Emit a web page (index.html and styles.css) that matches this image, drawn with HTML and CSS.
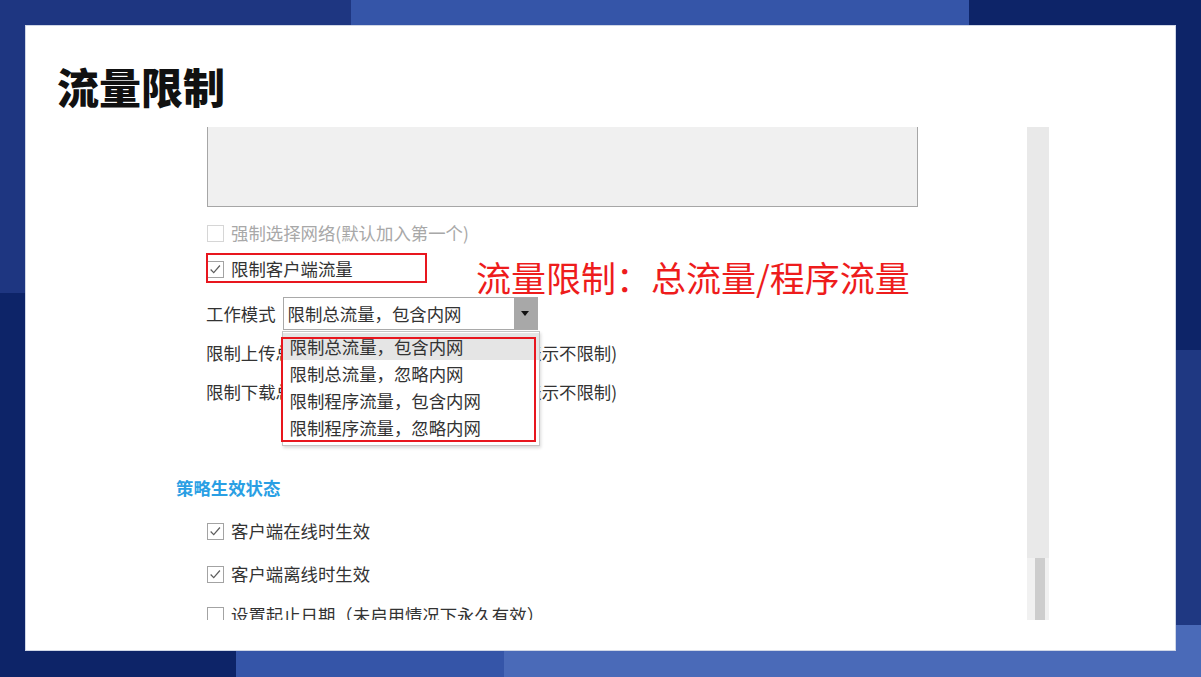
FILE: index.html
```html
<!DOCTYPE html>
<html lang="zh-CN">

<head>
    <meta charset="UTF-8">
    <meta name="viewport" content="width=device-width, initial-scale=1.0">
    <title>流量限制</title>
    <link rel="stylesheet" href="styles.css">
</head>

<body>
    <div class="slide">
        <div class="card">
            <h1 class="title">流量限制</h1>

            <div class="shot">
                <div class="pane">
                    <div class="notes-box"></div>

                    <div class="row row-force disabled">
                        <span class="box"></span>强制选择网络(默认加入第一个)
                    </div>

                    <div class="row row-limit marked">
                        <span class="box">
                            <svg viewBox="0 0 17 17" width="15" height="15"><polyline points="3,8.5 6.5,12 13.5,4" /></svg>
                        </span>限制客户端流量
                    </div>

                    <div class="row row-mode">
                        <span class="label">工作模式</span>
                        <div class="select">
                            <span class="value">限制总流量，包含内网</span>
                            <span class="arrow"></span>
                            <ul class="options">
                                <li class="current">限制总流量，包含内网</li>
                                <li>限制总流量，忽略内网</li>
                                <li>限制程序流量，包含内网</li>
                                <li>限制程序流量，忽略内网</li>
                            </ul>
                        </div>
                    </div>

                    <div class="row row-up">
                        <span>限制上传总流量</span>
                        <span class="field"></span>
                        <span>(0表示不限制)</span>
                    </div>

                    <div class="row row-down">
                        <span>限制下载总流量</span>
                        <span class="field"></span>
                        <span>(0表示不限制)</span>
                    </div>

                    <h2 class="section">策略生效状态</h2>

                    <div class="row row-online">
                        <span class="box">
                            <svg viewBox="0 0 17 17" width="15" height="15"><polyline points="3,8.5 6.5,12 13.5,4" /></svg>
                        </span>客户端在线时生效
                    </div>

                    <div class="row row-offline">
                        <span class="box">
                            <svg viewBox="0 0 17 17" width="15" height="15"><polyline points="3,8.5 6.5,12 13.5,4" /></svg>
                        </span>客户端离线时生效
                    </div>

                    <div class="row row-dates">
                        <span class="box"></span>设置起止日期（未启用情况下永久有效）
                    </div>

                    <p class="callout">流量限制：总流量/程序流量</p>
                </div>

                <div class="scrollbar">
                    <div class="thumb-track"><div class="thumb"></div></div>
                </div>
            </div>
        </div>
    </div>
</body>

</html>
```

FILE: styles.css
```css
body {
    margin: 0;
    font-family: "Noto Sans CJK SC", "Liberation Sans", sans-serif;
}

/* slide frame: coloured strips around the white card */
.slide {
    width: 1201px;
    height: 677px;
    box-sizing: border-box;
    padding: 25px 25px 26px 25px;
    background:
        linear-gradient(to right, #1e3681 0 351px, #3555a8 351px 969px, #0d2468 969px) top / 100% 25px no-repeat,
        linear-gradient(to right, #0d2468 0 236px, #3555a8 236px 504px, #4a6ab8 504px) bottom / 100% 26px no-repeat,
        linear-gradient(to bottom, #1e3681 0 293px, #0d2468 293px) left / 25px 100% no-repeat,
        linear-gradient(to bottom, #0d2468 0 350px, #1f3882 350px 625px, #4a6ab8 625px) right / 25px 100% no-repeat;
}

.card {
    height: 100%;
    box-sizing: border-box;
    background: #fff;
    border: 1px solid #cfd6e6;
    padding-top: 39px;
}

.title {
    margin: 0 0 20px 31px;
    font-size: 42px;
    line-height: 42px;
    font-weight: 900;
    color: #111;
}

/* settings window */
.shot {
    display: flex;
    margin-left: 144px;
    width: 879px;
    height: 493px;
    overflow: hidden;
}

.pane {
    flex: 1;
    position: relative;
    overflow: hidden;
}

.notes-box {
    margin: -20px 0 0 37px;
    width: 711px;
    height: 100px;
    box-sizing: border-box;
    background: #f0f0f0;
    border: 1px solid #a6a6a6;
}

.row {
    display: flex;
    align-items: center;
    height: 26px;
    padding-left: 37px;
    font-size: 17.4px;
    line-height: 26px;
    color: #333;
    white-space: nowrap;
}

.row-force { margin-top: 13px; }
.row-limit { margin-top: 10px; }
.row-mode { margin-top: 15px; height: 33px; padding-left: 36px; }
.row-up { margin-top: 10px; padding-left: 36px; }
.row-down { margin-top: 13px; padding-left: 36px; }
.row-online { margin-top: 17px; }
.row-offline { margin-top: 17px; }
.row-dates { margin-top: 15px; }

.box {
    flex: none;
    display: flex;
    align-items: center;
    justify-content: center;
    width: 17px;
    height: 17px;
    box-sizing: border-box;
    border: 1px solid #a3a3a3;
    margin-right: 7px;
    background: #fff;
}

.box polyline {
    fill: none;
    stroke: #5e5e5e;
    stroke-width: 1.4;
}

.disabled {
    color: #a8a8a8;
}

.disabled .box {
    border-color: #d6d6d6;
}

.marked {
    position: relative;
}

.marked::after {
    content: "";
    position: absolute;
    left: 36px;
    top: -3px;
    width: 221px;
    height: 30px;
    box-sizing: border-box;
    border: 2px solid #e8161e;
}

/* combo box with its open list */
.select {
    position: relative;
    display: flex;
    margin-left: 7px;
    width: 255px;
    height: 33px;
    box-sizing: border-box;
    border: 1px solid #a9a9a9;
    background: #fff;
}

.select .value {
    flex: 1;
    padding-left: 4px;
    line-height: 31px;
}

.select .arrow {
    width: 23px;
    background: #a8a8a8;
    display: flex;
    align-items: center;
    justify-content: center;
}

.select .arrow::before {
    content: "";
    border-left: 4px solid transparent;
    border-right: 4px solid transparent;
    border-top: 5px solid #111;
}

.options {
    position: absolute;
    z-index: 2;
    top: 33px;
    left: -2px;
    width: 256px;
    margin: 0;
    padding: 1px 0 4px;
    list-style: none;
    background: #fff;
    border: 1px solid #c4c4c4;
    box-shadow: 1px 2px 3px rgba(0, 0, 0, 0.15);
}

.options li {
    height: 27px;
    line-height: 27px;
    padding-left: 7px;
}

.options li.current {
    background: #e5e5e5;
}

.options::after {
    content: "";
    position: absolute;
    left: -2px;
    top: 5px;
    width: 255px;
    height: 105px;
    box-sizing: border-box;
    border: 2px solid #e8161e;
}

.field {
    width: 167px;
    height: 24px;
    box-sizing: border-box;
    border: 1px solid #aaa;
    margin: 0 6px 0 8px;
}

.section {
    margin: 70px 0 0;
    padding-left: 6px;
    height: 26px;
    line-height: 26px;
    font-size: 17.4px;
    font-weight: 700;
    color: #2a9fe4;
}

.callout {
    position: absolute;
    left: 306px;
    top: 132px;
    margin: 0;
    font-size: 35px;
    line-height: 35px;
    color: #ee1c1c;
    white-space: nowrap;
}

/* vertical scrollbar, scrolled to the bottom */
.scrollbar {
    width: 22px;
    background: #e9e9e9;
    display: flex;
    flex-direction: column;
    justify-content: flex-end;
}

.thumb-track {
    height: 62px;
    background: #f1f1f1;
    padding-left: 8px;
}

.thumb {
    width: 10px;
    height: 100%;
    background: #cdcdcd;
}
```
